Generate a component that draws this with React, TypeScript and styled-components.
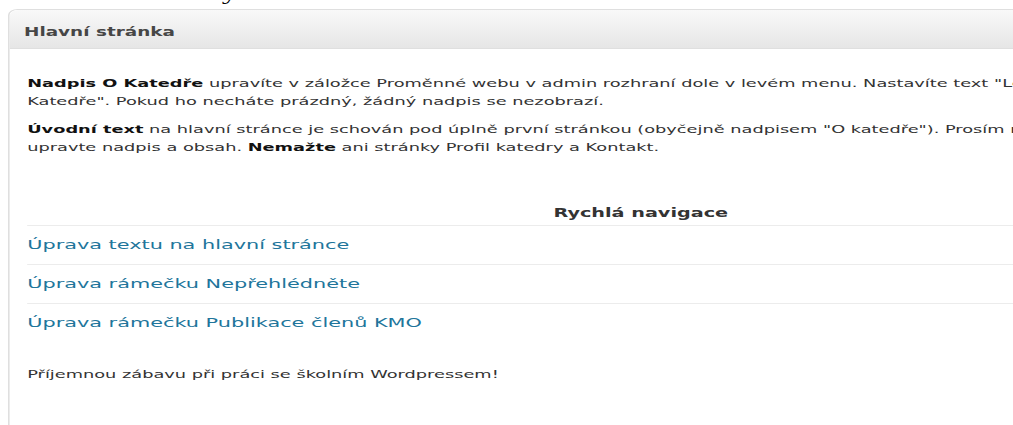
import React from "react";
import styled, { createGlobalStyle } from "styled-components";

const GlobalStyle = createGlobalStyle`
  html, body {
    margin: 0;
    padding: 0;
    background: #fff;
    overflow: hidden;
  }
  body {
    font-family: "DejaVu Sans", Verdana, sans-serif;
  }
`;

const Page = styled.div`
  width: 633px;
  transform: scaleX(1.6);
  transform-origin: 0 0;
`;

const PageTitle = styled.h1`
  margin: -18px 0 0;
  height: 27px;
  overflow: hidden;
  padding-left: 73px;
  font: normal 20px/20px "Liberation Serif", "Times New Roman", serif;
  color: #000;
`;

const Widget = styled.div`
  margin-left: 5px;
  width: 789px;
  border: 1px solid #dfdfdf;
  border-radius: 6px 6px 0 0;
  background: #fff;
`;

const WidgetHeader = styled.h3`
  margin: 0;
  height: 32px;
  padding: 6px 9px 0;
  font: bold 11.5px/32px "DejaVu Sans", Verdana, sans-serif;
  color: #464646;
  background: linear-gradient(#f9f9f9, #e6e6e6);
  border-bottom: 1px solid #dfdfdf;
  border-radius: 6px 6px 0 0;
`;

const Inside = styled.div`
  padding: 26px 11px 40px;
  font-size: 11.1px;
  line-height: 18px;
  color: #333;
`;

const Para = styled.p<{ $top?: number }>`
  margin: ${(p) => p.$top ?? 0}px 0 10px;
`;

const Strong = styled.strong`
  color: #111;
`;

const NavBlock = styled.div`
  margin-top: 48px;
`;

const NavHeading = styled.div`
  padding-bottom: 3px;
  text-align: center;
  font-weight: bold;
  font-size: 12px;
  line-height: 17px;
  color: #333;
`;

const NavRow = styled.div`
  display: flex;
  align-items: center;
  height: 38px;
  border-top: 1px solid #ececec;
`;

const NavLink = styled.a`
  font-size: 13px;
  color: #21759b;
  text-decoration: none;
`;

const links = [
  "Úprava textu na hlavní stránce",
  "Úprava rámečku Nepřehlédněte",
  "Úprava rámečku Publikace členů KMO",
];

const App = () => {
  return (
    <Page>
      <GlobalStyle />
      <PageTitle>Nástěnky</PageTitle>
      <Widget>
        <WidgetHeader>Hlavní stránka</WidgetHeader>
        <Inside>
          <Para>
            <Strong>Nadpis O Katedře</Strong> upravíte v záložce Proměnné webu v admin rozhraní dole v levém menu. Nastavíte text "Levý nadpis O
            <br />
            Katedře". Pokud ho necháte prázdný, žádný nadpis se nezobrazí.
          </Para>
          <Para>
            <Strong>Úvodní text</Strong> na hlavní stránce je schován pod úplně první stránkou (obyčejně nadpisem "O katedře"). Prosím nemažte ji, jen
            <br />
            upravte nadpis a obsah. <Strong>Nemažte</Strong> ani stránky Profil katedry a Kontakt.
          </Para>
          <NavBlock>
            <NavHeading>Rychlá navigace</NavHeading>
            {links.map((label) => (
              <NavRow key={label}>
                <NavLink href="#">{label}</NavLink>
              </NavRow>
            ))}
          </NavBlock>
          <Para $top={24}>Příjemnou zábavu při práci se školním Wordpressem!</Para>
        </Inside>
      </Widget>
    </Page>
  );
};

export default App;
